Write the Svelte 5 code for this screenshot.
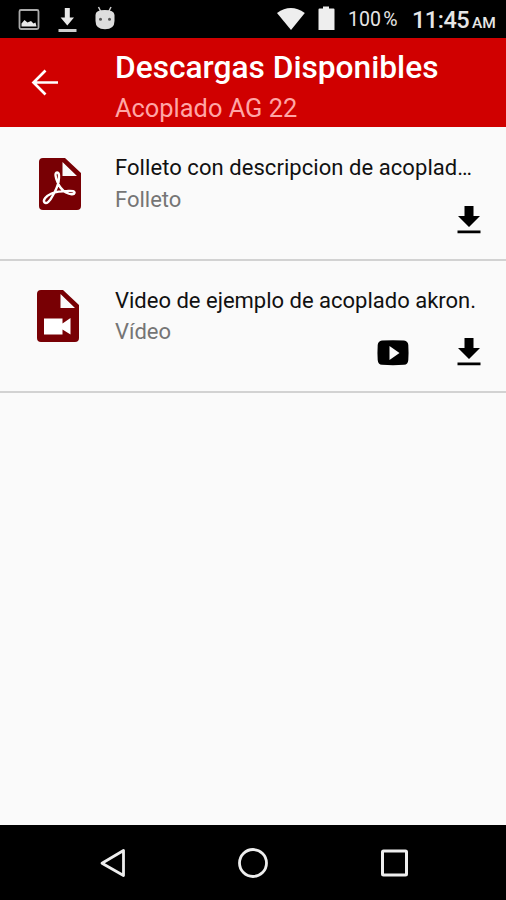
<script>
  const items = [
    { kind: 'pdf', title: 'Folleto con descripcion de acoplad…', type: 'Folleto' },
    { kind: 'video', title: 'Video de ejemplo de acoplado akron.', type: 'Vídeo' }
  ];
</script>

<div class="screen">
  <div class="status">
    <svg class="notifications" width="130" height="38" viewBox="0 0 130 38">
      <rect x="19.500" y="10" width="19" height="19" rx="1.5" fill="none" stroke="#aaa" stroke-width="1.8" />
      <path d="M21.500 26.500v-3l3-3.500 3 2.500 3.500-1.500 2.500 2.500 2-1 1 4z" fill="#e8e8e8" />
      <path d="M64.800 8h5v9.500h4.200l-6.700 8-6.700-8h4.200z" fill="#e8e8e8" />
      <rect x="58.500" y="29" width="18" height="3" fill="#ccc" />
      <path d="M98.500 7l2 4M111 7l-2 4" stroke="#ccc" stroke-width="1.500" />
      <path d="M95.500 15q0-5 9.300-5t9.700 5v6q0 8.200-9.500 8.200t-9.500-8.200z" fill="#ddd" />
      <circle cx="100.500" cy="19.300" r="1.500" fill="#555" />
      <circle cx="109.500" cy="19.300" r="1.500" fill="#555" />
    </svg>
    <svg class="signals" width="70" height="38" viewBox="0 0 70 38">
      <path d="M7 13Q20.800 3 34.800 13L21 30z" fill="#eee" />
      <path d="M52.500 6.500h6v2h4.500q1 0 1 1V30H48V9.500q0-1 1-1h3.500z" transform="translate(0.500 0)" fill="#eee" />
    </svg>
    <span class="battery">100 %</span>
    <span class="clock">11:45</span><span class="ampm">AM</span>
  </div>

  <header>
    <svg class="back" width="115" height="88" viewBox="0 0 115 88">
      <path d="M58 44.500H34M45.500 32.500l-12 12 12 12" fill="none" stroke="#fff" stroke-width="2.700" />
    </svg>
    <div class="heading">
      <h1>Descargas Disponibles</h1>
      <p>Acoplado AG 22</p>
    </div>
  </header>

  <main>
    {#each items as item}
      <article class={item.kind}>
        <svg class="file" width="44" height="54" viewBox="0 0 44 54">
          <path fill-rule="evenodd" d="M5 1H27L43 16V49Q43 53 39 53H5Q1 53 1 49V5Q1 1 5 1ZM24.500 5V19H39Z" fill="#780004" />
          {#if item.kind === 'pdf'}
            <g fill="none" stroke="#fff" stroke-width="2.400" stroke-linejoin="round">
              <path d="M19.500 25C17.500 20.500 16.500 15.500 19 15.500C21.500 15.500 21.300 19.500 20.500 25C19.500 29.500 17.500 34 14.500 39C12 44 8.500 47.500 6.500 45.500C4.500 43 8 39 13.500 36.500C18 34.700 24 34 29.500 34C34.500 33.500 37 34.500 36.500 36C36 38 32 37.500 28 35.500C23.500 33 21 29 19.500 25Z" />
            </g>
          {:else}
            <path d="M8 29.500H26.500V34.500L34.500 29V45.500L26.500 40.500V45.500H8Z" fill="#fff" />
          {/if}
        </svg>
        <div class="info">
          <h2>{item.title}</h2>
          <p>{item.type}</p>
        </div>
        <div class="actions">
          {#if item.kind === 'video'}
            <svg class="play" width="32" height="28" viewBox="0 0 32 28">
              <path fill-rule="evenodd" d="M5 1.500Q16 .8 27 1.500Q31 2 31.300 6Q31.800 14 31.300 21Q31 25.500 27 25.800Q16 26.500 5 25.800Q1 25.500.7 21Q.2 14 .7 6Q1 2 5 1.500ZM12.500 7V21L22.500 14Z" />
            </svg>
          {/if}
          <svg width="24" height="28" viewBox="0 0 24 28">
            <path d="M7.500 0h9v10H23L12 21 1 10h6.500zM.5 24.500h23v2.800H.5z" />
          </svg>
        </div>
      </article>
    {/each}
  </main>

  <nav>
    <svg width="30" height="34" viewBox="0 0 30 34">
      <path d="M25.500 4.500V29.500L4 17.200Z" fill="none" stroke="#eee" stroke-width="2.800" stroke-linejoin="round" />
    </svg>
    <svg width="34" height="34" viewBox="0 0 34 34">
      <circle cx="16" cy="17" r="13.500" fill="none" stroke="#eee" stroke-width="2.800" />
    </svg>
    <svg width="30" height="34" viewBox="0 0 30 34">
      <rect x="3.500" y="5" width="24" height="24" rx="1" fill="none" stroke="#eee" stroke-width="3" />
    </svg>
  </nav>
</div>

<style>
  .screen {
    width: 506px;
    height: 900px;
    display: flex;
    flex-direction: column;
    background: #fafafa;
    font-family: Roboto, sans-serif;
    overflow: hidden;
  }
  svg { display: block; flex: none; }
  h1, h2, p { margin: 0; white-space: nowrap; }
  .status {
    height: 38px;
    flex: none;
    display: flex;
    background: #000;
    color: #e6e6e6;
  }
  .signals { margin-left: 140px; }
  .status span { white-space: nowrap; line-height: 38px; }
  .status .battery { width: 64px; margin-left: 8px; font-size: 19.500px; line-height: 40px; word-spacing: -2.500px; }
  .status .clock { width: 60px; font-size: 23.500px; line-height: 40px; font-weight: 500; letter-spacing: -0.500px; }
  .ampm { font-size: 15.500px; font-weight: 500; padding-top: 4px; }
  header {
    height: 88.500px;
    flex: none;
    display: flex;
    background: #d00000;
    color: #fff;
  }
  .heading { padding-top: 12px; }
  h1 { font-size: 31.700px; line-height: 36px; font-weight: 500; }
  .heading p { margin-top: 7px; font-size: 25.400px; line-height: 30px; color: #ffa6a6; }
  article {
    display: flex;
    position: relative;
    box-sizing: border-box;
    height: 132px;
    border-bottom: 2px solid #d2d2d2;
  }
  .pdf { height: 134px; }
  .file { margin: 30px 33px 0 38px; }
  .video .file { margin: 28px 35px 0 36px; }
  .info { padding-top: 27.500px; }
  .video .info { padding-top: 26px; }
  h2 { font-size: 22px; line-height: 28px; font-weight: 400; color: #111; }
  .pdf h2 { letter-spacing: 0.060px; }
  .info p { margin-top: 3.500px; font-size: 22px; line-height: 28px; color: #757575; }
  .actions {
    position: absolute;
    right: 25px;
    bottom: 25px;
    display: flex;
    gap: 48px;
  }
  .play { margin: 1px 0 -1px; }
  nav {
    height: 75px;
    flex: none;
    margin-top: auto;
    display: flex;
    justify-content: space-between;
    box-sizing: border-box;
    padding: 21px 97px 0 98px;
    background: #000;
  }
</style>
